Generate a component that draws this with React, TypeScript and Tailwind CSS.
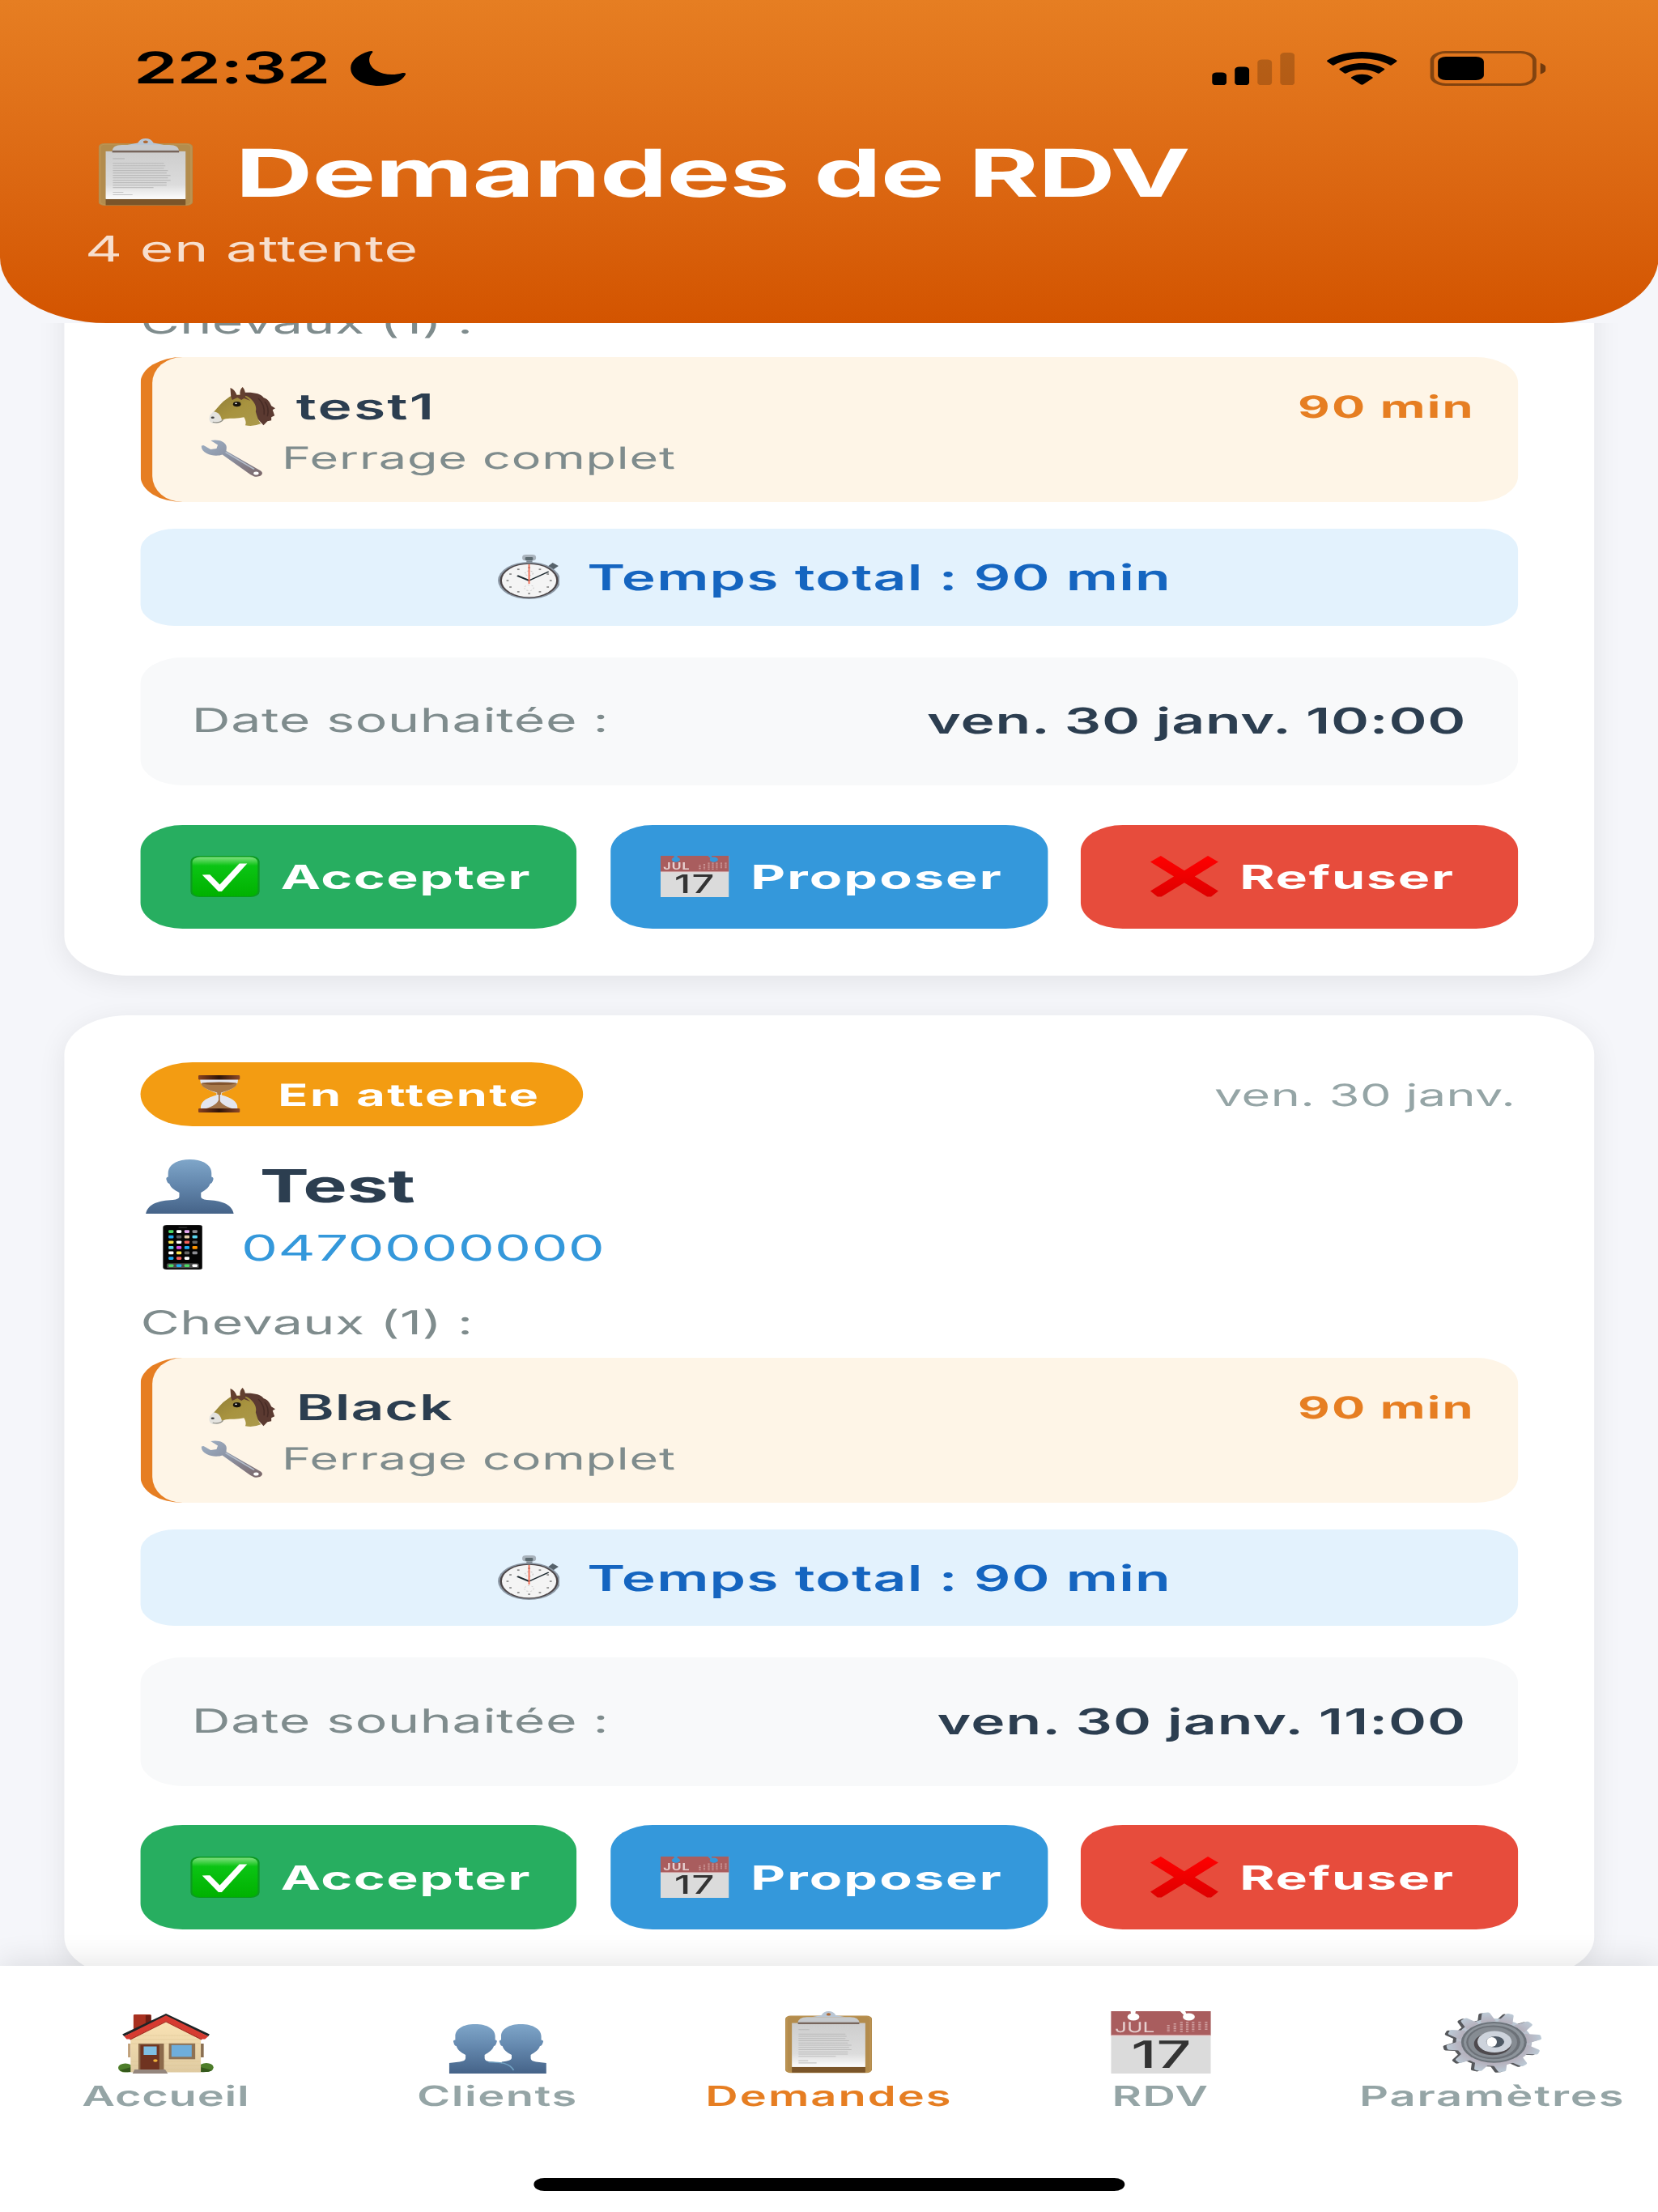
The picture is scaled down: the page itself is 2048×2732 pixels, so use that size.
import React from "react";

/* ---------- status bar glyphs ---------- */

const Moon = () => (
  <svg width="42.5" height="43" viewBox="0 0 43 43" preserveAspectRatio="none">
    <path d="M17 1.500C13 8 13.500 17 19 23.500C25 29.500 33 30.500 40 27Q43.500 26.300 42 30C39 38 31 43 22 43C9 43 0 33 0 21C0 12 6 4 14 .5Q17.500-.6 17 1.500Z" />
  </svg>
);

const Signal = () => (
  <svg width="62.9" height="40.5" viewBox="0 0 62.9 40.5">
    <rect x="0" y="24.500" width="11" height="16" rx="3.500" />
    <rect x="17.300" y="17.500" width="11" height="23" rx="3.500" />
    <rect x="34.600" y="8.500" width="11" height="32" rx="3.500" opacity=".2" />
    <rect x="51.900" y="0" width="11" height="40.500" rx="3.500" opacity=".2" />
  </svg>
);

const Wifi = () => (
  <svg width="54.3" height="41" viewBox="0 0 54 41">
    <path d="M.8 10.200C15-3.400 39-3.400 53.200 10.200Q54 11.200 53.300 12.200L49.500 16.500Q49 17 48.300 16.500C36.500 5.500 17.500 5.500 5.700 16.500Q5 17 4.500 16.500L.7 12.200Q0 11.200 .8 10.200Z" />
    <path d="M10 20.800C19.500 11.800 34.500 11.800 44 20.800Q44.600 21.600 44 22.300L40.300 26.500Q39.700 27 39 26.500C32 20.600 22 20.600 15 26.500Q14.300 27 13.700 26.500L10 22.300Q9.400 21.600 10 20.800Z" />
    <path d="M19 31.300C23.500 26.700 30.500 26.700 35 31.300Q35.500 32 35 32.800L28 40.300Q27 41.200 26 40.300L19 32.800Q18.500 32 19 31.300Z" />
  </svg>
);

const Battery = () => (
  <svg width="88.500" height="43" viewBox="0 0 88.5 43">
    <rect x="1.500" y="1.500" width="78" height="40" rx="10.500" fill="none" stroke="#000" strokeWidth="3" opacity=".42" />
    <rect x="6" y="7" width="35" height="29" rx="6" />
    <path d="M84 15C90 17.500 90 26 84 28.500Z" opacity=".5" />
  </svg>
);

/* ---------- emoji style pictures ---------- */

const Clipboard = ({ className }: { className: string }) => (
  <svg className={className} viewBox="0 0 72 84" preserveAspectRatio="none">
    <defs>
      <linearGradient id="paper" x1="0" y1="0" x2="0" y2="1">
        <stop offset="0" stopColor="#cdcdcd" />
        <stop offset=".7" stopColor="#dcdcdc" />
        <stop offset="1" stopColor="#fdfdfd" />
      </linearGradient>
    </defs>
    <rect x="0" y="6" width="72" height="77.500" rx="4.500" fill="#b38c4d" />
    <rect x="1.300" y="7.300" width="69.400" height="75" rx="3.500" fill="none" stroke="#bd9453" strokeWidth="1" />
    <rect x="5.500" y="74" width="61" height="9" fill="#7a552a" />
    <rect x="5.500" y="16" width="61" height="59.500" fill="url(#paper)" />
    <path d="M22 8L30 5.500Q32 0 36 0Q40 0 42 5.500L50 8Z" fill="#b9c6d4" />
    <circle cx="36" cy="4.300" r="1.800" fill="#b06a35" />
    <path d="M10.500 16.500Q10.500 8 18 8H54Q61.500 8 61.500 16.500Z" fill="#c6c9cc" />
    <rect x="10.500" y="15" width="51" height="2.500" fill="#77655c" />
    <g stroke="#a9a9a9" strokeWidth="1.200">
      <path d="M11 25H20M11 31H50M11 34H51M11 37H50M11 40H53M11 43H52M11 46H55M11 49H53M11 52H55M11 55H52M11 58H52M11 61H42M11 67H19M11 70H26" opacity=".6" />
    </g>
  </svg>
);

const Horse = () => (
  <svg className="h-[48.3px] w-[50.6px]" viewBox="0 0 51 48" preserveAspectRatio="none">
    <defs>
      <linearGradient id="hide" x1="0" y1="0" x2="1" y2="1">
        <stop offset="0" stopColor="#8d7b35" />
        <stop offset=".5" stopColor="#a8933f" />
        <stop offset="1" stopColor="#ab9a4c" />
      </linearGradient>
    </defs>
    <path d="M26 7C34 6 40 8 42 13C46 15 47 20 48 23L51 26L49 28L50.500 35L48 37L48 41L45 42L42 47L38 40L30 26L24 10Z" fill="#5b3a31" />
    <path d="M16 12C20 8 28 9 31 13C35 18 37 24 36 30C37 36 38 41 40 45Q34 49 28 47C29 43 28 40 27 37C22 39 17 38 13 39L3 44L1 36C4 30 8 23 11 18Z" fill="url(#hide)" />
    <path d="M3.500 30C8 31 9 35 10 40C9 44 6 45.500 3 44.500C0 43 0 39 .8 35Z" fill="#e4e3df" />
    <path d="M3 43C7 44.500 9.500 43 11 40" stroke="#8d8d85" strokeWidth="1" fill="none" />
    <circle cx="3" cy="37.500" r="1.300" fill="#444" />
    <path d="M17 12L16.500 1Q20 3 21.500 10L24 10Q23.500 3 26 0Q28.500 5 28 12L32 17L27 14L25 16L22 13L18 16Z" fill="#64402f" />
    <path d="M38 14C42 20 43 26 42.500 34M43 18C45.500 23 46 30 45 36" stroke="#472b25" strokeWidth="1" fill="none" />
    <circle cx="21.600" cy="21" r="3" fill="#17130c" />
    <circle cx="20.900" cy="20.200" r=".8" fill="#fff" />
  </svg>
);

const Wrench = () => (
  <svg className="h-[46px] w-[47.5px]" viewBox="0 0 48 46" preserveAspectRatio="none">
    <defs>
      <linearGradient id="steel" x1="0" y1="0" x2="1" y2="1">
        <stop offset="0" stopColor="#9fb0c4" />
        <stop offset=".45" stopColor="#8b92a3" />
        <stop offset="1" stopColor="#7b6668" />
      </linearGradient>
    </defs>
    <path d="M7.500 1C13-1 18.500 2 19.500 7.500C20 10 19.500 12 19.500 14L46 38.500C49 42 46 47 41 45.500L38 43L16.500 18.500C13 20.500 8 20 4.500 17C1.500 14.500 0 11 .5 7.500L2 7L7.500 12L12 11L13 6.500Z" fill="url(#steel)" />
    <path d="M19 15.500L41 36.500" stroke="#b4bdca" strokeWidth="1.300" fill="none" />
    <circle cx="42.500" cy="41.500" r="2" fill="#fff" />
  </svg>
);

const Stopwatch = () => (
  <svg className="h-[55px] w-[47.8px]" viewBox="0 0 48 55" preserveAspectRatio="none">
    <rect x="22" y="5" width="4.500" height="6" fill="#7f8a94" />
    <rect x="18.800" y="0" width="10.500" height="7.500" rx="3" fill="#a9b3bc" />
    <rect x="21" y="3" width="6" height="4" rx="1" fill="#5c6a70" />
    <path d="M38 15L42 10L46.500 14L42 19Z" fill="#56626b" />
    <ellipse cx="24" cy="32" rx="23.800" ry="23" fill="#8c98a5" />
    <ellipse cx="24" cy="32" rx="22.300" ry="21.600" fill="#4c4648" />
    <ellipse cx="24" cy="32" rx="20.800" ry="20.200" fill="#f4f4f4" />
    {Array.from({ length: 12 }, (_, i) => {
      const a = (i * Math.PI) / 6;
      return <rect key={i} x={23.200 + 16.500 * Math.sin(a)} y={31.200 - 16 * Math.cos(a)} width="1.700" height="1.700" fill="#8a8a8a" />;
    })}
    <circle cx="24" cy="23" r="3" fill="none" stroke="#c6c6c6" strokeWidth=".8" strokeDasharray="1.500 1.500" />
    <circle cx="24" cy="41" r="3.500" fill="none" stroke="#cfcfcf" strokeWidth=".8" strokeDasharray="1.500 1.500" />
    <path d="M24 32L15 26" stroke="#1e2a30" strokeWidth="1.900" />
    <path d="M24 32L39 21" stroke="#1e2a30" strokeWidth="1.300" />
    <path d="M24 36V12" stroke="#f0654a" strokeWidth="1.100" />
  </svg>
);

const CheckMark = () => (
  <svg className="ml-[3px] h-[51px] w-[52.7px]" viewBox="0 0 53 51" preserveAspectRatio="none">
    <defs>
      <linearGradient id="tile" x1="0" y1="0" x2="0" y2="1">
        <stop offset="0" stopColor="#7fe07f" />
        <stop offset=".22" stopColor="#0bc414" />
        <stop offset="1" stopColor="#00b100" />
      </linearGradient>
    </defs>
    <rect x="0" y="0" width="53" height="51" rx="7" fill="#0b9a20" />
    <rect x="1.500" y="1.500" width="50" height="48.500" rx="6" fill="url(#tile)" />
    <path d="M9 23.500L15 23.200L22.500 35.500L37.500 9.500H43.500L24 44H21.500Z" fill="#fff" />
  </svg>
);

const Calendar = ({ className, holes }: { className: string; holes: string }) => (
  <svg className={className} viewBox="0 0 77 77" preserveAspectRatio="none">
    <rect width="77" height="77" fill="#dbdbdb" />
    <rect width="77" height="30" fill="#a95d5e" />
    <rect y="29.500" width="77" height="1.500" fill="#e9d5d5" />
    <path d="M15 0H19L18.500 4H15.500ZM53 0H57L58 4L56 5Z" fill={holes} />
    <circle cx="17.200" cy="7" r="4.600" fill={holes} />
    <circle cx="59.700" cy="7" r="4.600" fill={holes} />
    <text x="3" y="26" fontSize="17.500" fontFamily="Inter" textLength="30.500" lengthAdjust="spacingAndGlyphs" fill="#e6cfcf">JUL</text>
    <path d="M44 17V26M49 15V26M54 13V26M58.500 13V26M63 13V25M68 13V24M73 13V23" stroke="#cf9f9f" strokeWidth="2" strokeDasharray="1.600 1.200" />
    <text x="15.500" y="69.500" fontSize="46.500" fontFamily="Inter" textLength="46" lengthAdjust="spacingAndGlyphs" fontWeight="500" fill="#333">17</text>
  </svg>
);

const Cross = () => (
  <svg className="ml-[4.5px] h-[51px] w-[51.8px]" viewBox="0 0 52 51" preserveAspectRatio="none">
    <defs>
      <linearGradient id="cross" x1="0" y1="0" x2="0" y2="1">
        <stop offset="0" stopColor="#ff0000" />
        <stop offset="1" stopColor="#de0000" />
      </linearGradient>
    </defs>
    <path d="M8 0L26 18.300L44 0L52 7.500L34 25.500L52 43.500L46.500 50.500H43.500L26 33.300L8.500 50.500H5.500L0 43.500L18 25.500L0 7.500Z" fill="url(#cross)" />
  </svg>
);

const Hourglass = () => (
  <svg className="h-[46px] w-[31.7px]" viewBox="0 0 32 46" preserveAspectRatio="none">
    <defs>
      <linearGradient id="wood" x1="0" y1="0" x2="1" y2="0">
        <stop offset="0" stopColor="#8a4320" />
        <stop offset=".5" stopColor="#2f1409" />
        <stop offset="1" stopColor="#8f4a28" />
      </linearGradient>
    </defs>
    <path d="M1.500 5H30.500C31 14 25 18 18 22V24.500C26 28 31 33 30 42H2C1 33 6 28 14 24.500V22C7 18 1 14 1.500 5Z" fill="#e3e6ef" />
    <path d="M2 10H30C29 16 23 19 17.500 21.500V24H14.500V21.500C9 19 3 16 2 10Z" fill="#a8794a" />
    <path d="M2.500 9.500Q16 7.500 29.500 9.500Q28 12 16 12Q4 12 2.500 9.500Z" fill="#83552f" />
    <path d="M16 29C17 35 21 39 27 41.500H5C11 39 15 35 16 29Z" fill="#a2744a" />
    <rect x="15.600" y="23" width="1" height="9" fill="#9c6b3d" />
    <rect x="0" y="0" width="32" height="5.500" rx="1" fill="url(#wood)" />
    <rect x="0" y="41" width="32" height="5" rx="1" fill="url(#wood)" />
  </svg>
);

const BlueFill = ({ id }: { id: string }) => (
  <defs>
    <linearGradient id={id} x1="0" y1="0" x2="0" y2="1">
      <stop offset="0" stopColor="#7fa6c9" />
      <stop offset=".45" stopColor="#6488ae" />
      <stop offset="1" stopColor="#456388" />
    </linearGradient>
  </defs>
);

const Person = () => (
  <svg className="ml-[3.9px] h-[67px] w-[67.1px]" viewBox="0 0 67 67" preserveAspectRatio="none">
    <BlueFill id="bust" />
    <path d="M33.500 0C43 0 50 6.500 50 17V21.500Q52 22 51.200 25.500Q50.500 29.500 49 30C48 35 45 38 42 41V46Q42 49 46.500 50C57 51 65 54 67 67H0C2 54 10 51 20.500 50Q25.500 49 25.500 46V41C22 38 19 35 18 30Q16.500 29.500 15.800 25.500Q15 22 17 21.500V17C17 6.500 24 0 33.500 0Z" fill="url(#bust)" />
  </svg>
);

const People = ({ className }: { className: string }) => (
  <svg className={className} viewBox="0 0 74 61" preserveAspectRatio="none">
    <BlueFill id="busts" />
    <path d="M54.500 0C63.500 0 70 6 70 15V19.500Q72.200 19.500 71.200 23Q70.500 27 69 27C68 32 65 35 62 38V42Q62 45.500 66 46.500L74 48V61H40V46.500Q47.500 45 47.500 42V38C44 35 41.500 32 40.500 27Q39 27 38.500 23Q37.500 19.500 39.500 19.500V15C39.500 6 45.500 0 54.500 0Z" fill="url(#busts)" />
    <path d="M19.700 0C29 0 35 6 35 15V19.500Q37 19.500 36 23Q35.300 27 34 27C33 32 30 35 27 38V42Q27 45.500 31 46.500C39 47 46 48 49 61H0V48L8 46.500Q12.500 45.500 12.500 42V38C9 35 6.500 32 5.500 27Q4 27 3.500 23Q2.500 19.500 4.700 19.500V15C4.700 6 10.500 0 19.700 0Z" fill="url(#busts)" />
    <path d="M30 46.800C40 47 46 48 49 57" stroke="#6f9fc0" strokeWidth="1.200" fill="none" />
  </svg>
);

const APP_ROWS = [
  ["#4cd964", "#ffffff", "#e3a5f0", "#8e8e93"],
  ["#1eaaf1", "#5b5b60", "#e0c9a6", "#5ad7f0"],
  ["#f5e04a", "#ffffff", "#f4605a", "#666666"],
  ["#5ad7f0", "#d850e8", "#1eaaf1", "#ff9500"],
  ["#ffffff", "#f5e04a", "#666666", "#8e8e93"],
  ["#1eaaf1", "#f4605a", "#ffffff"],
];

const Phone = () => (
  <svg className="ml-[16.8px] h-[55px] w-[30.5px]" viewBox="0 0 31 55" preserveAspectRatio="none">
    <rect width="31" height="55" rx="3" fill="#222" />
    <rect x=".8" y=".8" width="29.400" height="53.400" rx="2.500" fill="#050505" />
    <rect x="12" y="2.300" width="7" height="1.400" rx=".7" fill="#2c2c2c" />
    <rect x="3" y="47.300" width="25" height="6" rx="1.500" fill="#4a4a4a" />
    {APP_ROWS.map((row, r) =>
      row.map((c, i) => <rect key={`${r}-${i}`} x={4.400 + i * 6.150} y={6.200 + r * 6.600} width="3.900" height="3.700" rx=".8" fill={c} />),
    )}
    {["#4cd964", "#1eaaf1", "#4cd964", "#ffffff"].map((c, i) => (
      <rect key={i} x={4.400 + i * 6.150} y="48.400" width="3.900" height="3.700" rx=".8" fill={c} />
    ))}
  </svg>
);

const House = ({ className }: { className: string }) => (
  <svg className={className} viewBox="0 0 73 74" preserveAspectRatio="none">
    <defs>
      <linearGradient id="wall" x1="0" y1="0" x2="0" y2="1">
        <stop offset="0" stopColor="#fbe3b4" />
        <stop offset="1" stopColor="#dfcba2" />
      </linearGradient>
    </defs>
    <rect x="11.700" y="1" width="13.500" height="22" rx="1" fill="#a8301f" />
    <rect x="21" y="2" width="4.200" height="18" fill="#6f1e14" />
    <circle cx="5.500" cy="67" r="5.500" fill="#4d7d2a" />
    <circle cx="67.500" cy="66.500" r="5.500" fill="#4d7d2a" />
    <path d="M1 70Q5 73 10 72V66Z M72 70Q68 73 63 72V66Z" fill="#35591c" />
    <rect x="7.500" y="37" width="2" height="17" fill="#c0a17b" />
    <rect x="63" y="37" width="2.500" height="17" fill="#8a6f52" />
    <path d="M9.500 28L36.600 7L63.300 28V72.500H9.500Z" fill="url(#wall)" />
    <path d="M14 27H59M10 32H63M10 37H63M10 59H63M10 64H63M10 69H63" stroke="#d9c294" strokeWidth=".7" />
    <path d="M36.600 0L70 25.500L69 28L36.600 5L4.500 28L3.200 25.500Z" fill="#1f2426" />
    <path d="M36.600 2.300L69 28L66.500 31.500H64L36.600 9.500L9 31.500H6.500L4.500 28Z" fill="#d63b31" />
    <path d="M9 32L36.600 9.800L64 32" stroke="#a8281f" strokeWidth="1" fill="none" />
    <rect x="15.500" y="37" width="19.500" height="32" fill="#8c6a4b" />
    <rect x="17" y="38.500" width="14.500" height="30.500" fill="#6f3320" />
    <rect x="19.500" y="40.500" width="10" height="10.500" fill="#7fbfe3" />
    <circle cx="28.500" cy="58" r="1.700" fill="#f0b33c" />
    <rect x="38.800" y="36.800" width="20.200" height="19.500" fill="#8f7253" />
    <rect x="40.800" y="38.800" width="15.500" height="14.500" fill="#6faedb" />
    <path d="M12.500 69H36L38 74H11Z" fill="#94867d" />
  </svg>
);

const GearTeeth = ({ fill, dx, dy }: { fill: string; dx: number; dy: number }) => (
  <g fill={fill} transform={`translate(${dx} ${dy})`}>
    <circle cx="40.500" cy="37.500" r="29.500" />
    {Array.from({ length: 12 }, (_, i) => (
      <path key={i} d="M34.500 12L37.300 1.500Q37.800 .3 39 .3H42Q43.200 .3 43.700 1.500L46.500 12Z" transform={`rotate(${-10 + i * 30} 40.500 37.500)`} />
    ))}
  </g>
);

const Gear = ({ className }: { className: string }) => (
  <svg className={className} viewBox="0 0 78 76" preserveAspectRatio="none">
    <defs>
      <linearGradient id="metal" x1="0" y1="0" x2="0" y2="1">
        <stop offset="0" stopColor="#bccad6" />
        <stop offset="1" stopColor="#b5b0bc" />
      </linearGradient>
    </defs>
    <GearTeeth fill="#56585c" dx={-2.600} dy={.7} />
    <GearTeeth fill="url(#metal)" dx={0} dy={0} />
    <circle cx="40.500" cy="37.500" r="25.500" fill="#6d737a" />
    <circle cx="40.500" cy="37.500" r="23.500" fill="#8d949b" />
    <circle cx="40" cy="37.500" r="21" fill="#6c7178" />
    <circle cx="39.500" cy="37.500" r="19" fill="#868c93" />
    <ellipse cx="39.500" cy="39.500" rx="14.500" ry="14" fill="#4e4a4e" />
    <circle cx="41" cy="37" r="13.300" fill="#cdd3dc" />
    <circle cx="41.500" cy="37" r="7" fill="#4f5a66" />
    <ellipse cx="38.800" cy="37.200" rx="4" ry="6" fill="#fff" />
  </svg>
);

/* ---------- request card ---------- */

type Request = { horse: string; horseClass: string; date: string; dateClass: string; client?: string; phone?: string; asked?: string };

const REQUESTS: Request[] = [
  { horse: "test1", horseClass: "tracking-[1.38px]", date: "ven. 30 janv. 10:00", dateClass: "tracking-[0.5px]" },
  { horse: "Black", horseClass: "tracking-[0.6px]", date: "ven. 30 janv. 11:00", dateClass: "tracking-[0.64px]", client: "Test", phone: "0470000000", asked: "ven. 30 janv." },
];

const action = "flex h-[128.3px] flex-1 items-center justify-center rounded-[32px] text-[40.8px] leading-[48px] font-bold text-white";

const RequestCard = ({ r }: { r: Request }) => (
  <article className="rounded-[48.6px] bg-white p-[58.3px] shadow-[0_6.5px_27px_rgba(0,0,0,0.08)]">
    {r.client && (
      <>
        <div className="flex items-center justify-between">
          <span className="flex h-[78.5px] w-[336.8px] items-center gap-[29.1px] rounded-full bg-[#f39c12] pl-[44px] text-[37.7px] leading-[44px] font-bold tracking-[1.49px] text-white">
            <Hourglass />
            <span className="mt-[3px]">En attente</span>
          </span>
          <span className="mt-[2.5px] pr-[1.5px] text-[37.7px] leading-[44px] tracking-[0.25px] text-[#95a5a6]">{r.asked}</span>
        </div>
        <h2 className="mt-[40.7px] flex items-center gap-[19.9px] text-[56.5px] leading-[68px] font-bold tracking-[-0.31px] text-[#2c3e50]">
          <Person />
          {r.client}
        </h2>
        <div className="mt-[15.5px] mb-[42.2px] flex h-[52px] items-center gap-[29.6px] text-[44px] leading-[52px] tracking-[0.22px] text-[#3498db]">
          <Phone />
          {r.phone}
        </div>
      </>
    )}
    <p className="text-[40.8px] leading-[48px] tracking-[0.27px] text-[#7f8c8d]">Chevaux (1) :</p>
    <div className="mt-[20.1px] h-[179px] rounded-[32px] border-l-[9.7px] border-[#e67e22] bg-[#fef5e7] pt-[34.7px] pr-[32.7px] pl-[37px]">
      <div className="flex items-start justify-between">
        <span className={`flex h-[52px] items-center gap-[15.9px] pl-[6.1px] text-[44px] leading-[52px] font-semibold text-[#2c3e50] ${r.horseClass}`}>
          <Horse />
          {r.horse}
        </span>
        <span className="mt-[4.8px] text-[37.7px] leading-[44px] font-bold tracking-[1.3px] text-[#e67e22]">90 min</span>
      </div>
      <div className="mt-[14.9px] flex h-[46px] items-center gap-[14.2px] text-[37.7px] leading-[46px] tracking-[0.53px] text-[#7f8c8d]">
        <Wrench />
        Ferrage complet
      </div>
    </div>
    <div className="mt-[32.7px] flex h-[119.7px] items-center justify-center gap-[20.6px] rounded-[26px] bg-[#e3f2fd] pl-[8px] text-[44px] leading-[52px] font-semibold tracking-[0.7px] text-[#1565c0]">
      <Stopwatch />
      <span className="mt-[1.5px]">Temps total : 90 min</span>
    </div>
    <div className="mt-[39px] flex h-[158.5px] items-center justify-between rounded-[32px] bg-[#f8f9fa] px-[39.1px]">
      <span className="mb-[3px] text-[40.8px] leading-[48px] tracking-[0.4px] text-[#7f8c8d]">Date souhaitée :</span>
      <span className={`mb-[1px] text-[44px] leading-[52px] font-semibold text-[#2c3e50] ${r.dateClass}`}>{r.date}</span>
    </div>
    <div className="mt-[48.5px] flex gap-[25.7px]">
      <button className={`${action} gap-[16.3px] bg-[#27ae60] tracking-[0.95px]`}>
        <CheckMark />
        <span className="mt-[1px]">Accepter</span>
      </button>
      <button className={`${action} gap-[16.3px] bg-[#3498db] tracking-[1.31px]`}>
        <Calendar className="ml-[4px] h-[51px] w-[52.4px]" holes="#3498db" />
        <span className="mt-[1px]">Proposer</span>
      </button>
      <button className={`${action} gap-[16.4px] bg-[#e74c3c] tracking-[1.1px]`}>
        <Cross />
        <span className="mt-[1px]">Refuser</span>
      </button>
    </div>
  </article>
);

const TABS = [
  { label: "Accueil", icon: <House className="h-[74px] w-[72.6px]" />, cls: "tracking-[0.47px] text-[#95a5a6]" },
  { label: "Clients", icon: <People className="h-[61px] w-[74.2px]" />, cls: "tracking-[0.95px] text-[#95a5a6]" },
  { label: "Demandes", icon: <Clipboard className="h-[76.7px] w-[66px]" />, cls: "tracking-[1.25px] text-[#e67e22]" },
  { label: "RDV", icon: <Calendar className="h-[77px] w-[76.5px]" holes="#ffffff" />, cls: "tracking-[0.9px] text-[#95a5a6]" },
  { label: "Paramètres", icon: <Gear className="h-[75.7px] w-[76.4px]" />, cls: "tracking-[1.16px] text-[#95a5a6]" },
];

export default function App() {
  return (
    <div className="h-[2732px] w-[2048px] overflow-hidden bg-[#f5f6fa]">
      <div className="flex h-[2732px] w-[1262.6px] origin-top-left scale-x-[1.62205] flex-col font-['Inter',sans-serif] whitespace-nowrap [text-rendering:geometricPrecision]">
        <header className="h-[399px] shrink-0 rounded-b-[81px] bg-linear-to-b from-[#e67e22] to-[#d35400] pt-[57.9px]">
          <div className="flex h-[54px] items-center pr-[85.4px] pl-[101.7px]">
            <span className="mr-[15.5px] text-[54px] leading-[54px] font-semibold tracking-[-0.6px] text-black">22:32</span>
            <Moon />
            <div className="ml-auto flex items-center gap-[24.1px]">
              <Signal />
              <Wifi />
              <Battery />
            </div>
          </div>
          <h1 className="mt-[54.3px] flex h-[96px] items-center gap-[32.3px] pl-[75.2px] text-[81.6px] leading-[96px] font-bold tracking-[-0.53px] text-white">
            <Clipboard className="mb-[3px] h-[83.4px] w-[71.8px]" />
            Demandes de RDV
          </h1>
          <p className="mt-[17.5px] pl-[64.8px] text-[44px] leading-[54px] tracking-[0.48px] text-white/80">4 en attente</p>
        </header>
        <main className="h-[2029px] shrink-0 overflow-hidden px-[48.6px]">
          <div className="-mt-[84.2px] flex flex-col gap-[48.6px]">
            {REQUESTS.map((r) => (
              <RequestCard key={r.horse} r={r} />
            ))}
          </div>
        </main>
        <nav className="relative flex h-[304px] shrink-0 flex-col bg-white pt-[55.7px] shadow-[0_-6.5px_27px_rgba(0,0,0,0.1)]">
          <div className="grid grid-cols-5">
            {TABS.map((t) => (
              <div key={t.label} className="flex flex-col items-center gap-[8.5px]">
                <div className="flex h-[77px] items-end">{t.icon}</div>
                <span className={`text-[34.5px] leading-[42px] font-semibold ${t.cls}`}>{t.label}</span>
              </div>
            ))}
          </div>
          <div className="mx-auto mt-auto mb-[26px] h-[16px] w-[450px] translate-x-[0.5px] rounded-full bg-black" />
        </nav>
      </div>
    </div>
  );
}
